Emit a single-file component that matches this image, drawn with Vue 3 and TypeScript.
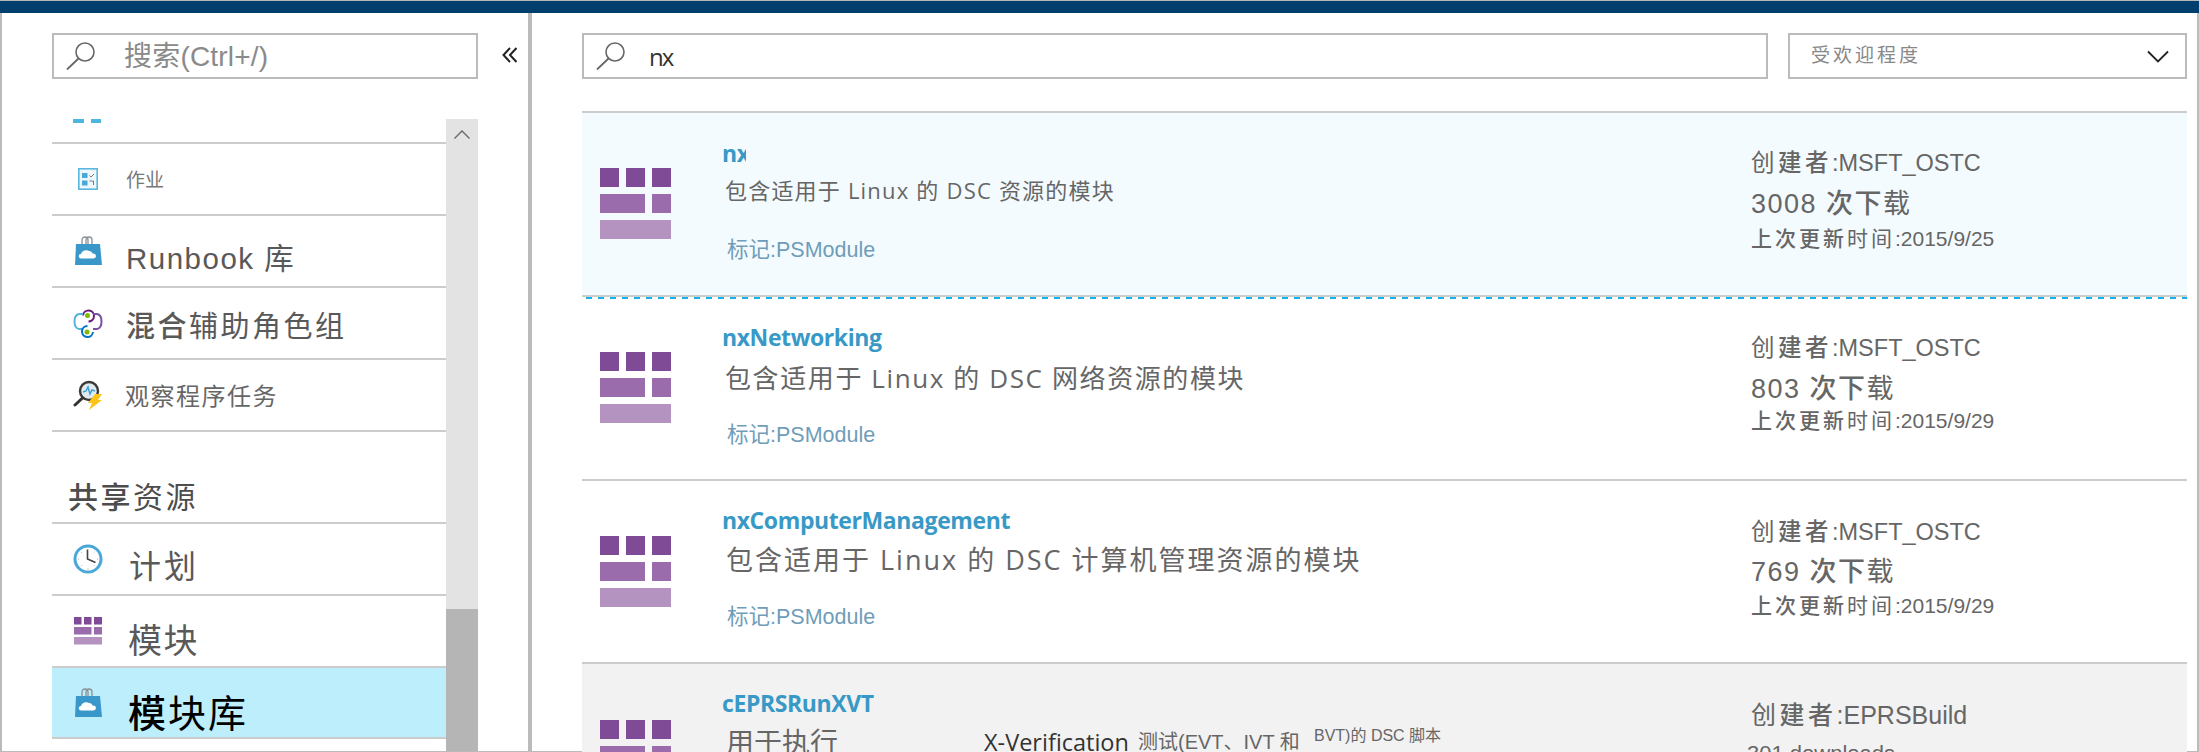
<script setup lang="ts">
interface SideItem {
  key: string;
  strong: string;
  rest: string;
  icon: string;
}

interface ModuleRow {
  key: string;
  name: string;
  desc: string;
  author: string;
  downloads: string;
  updated: string;
}

const opsItems: SideItem[] = [
  { key: 'job', strong: '', rest: '作业', icon: 'job' },
  { key: 'runbook', strong: '', rest: 'Runbook 库', icon: 'bag' },
  { key: 'hybrid', strong: '混合', rest: '辅助角色组', icon: 'hybrid' },
  { key: 'watcher', strong: '', rest: '观察程序任务', icon: 'watcher' },
];

const sharedItems: SideItem[] = [
  { key: 'schedule', strong: '', rest: '计划', icon: 'clock' },
  { key: 'modules', strong: '', rest: '模块', icon: 'bricks' },
  { key: 'gallery', strong: '模', rest: '块库', icon: 'bag' },
];

const rows: ModuleRow[] = [
  {
    key: 'nx',
    name: 'nx',
    desc: '包含适用于 Linux 的 DSC 资源的模块',
    author: 'MSFT_OSTC',
    downloads: '3008',
    updated: '2015/9/25',
  },
  {
    key: 'net',
    name: 'nxNetworking',
    desc: '包含适用于 Linux 的 DSC 网络资源的模块',
    author: 'MSFT_OSTC',
    downloads: '803',
    updated: '2015/9/29',
  },
  {
    key: 'comp',
    name: 'nxComputerManagement',
    desc: '包含适用于 Linux 的 DSC 计算机管理资源的模块',
    author: 'MSFT_OSTC',
    downloads: '769',
    updated: '2015/9/29',
  },
];
</script>

<template>
  <div class="frame">
    <div class="topbar"></div>
    <div class="body">
      <aside class="sidebar">
        <div class="side-head">
          <div class="searchbox side-search">
            <svg class="mag" viewBox="0 0 30 28" width="30" height="28">
              <circle cx="19" cy="10" r="9" fill="none" stroke="#666" stroke-width="1.6" />
              <path d="M12.5 16.5 1 27.5" fill="none" stroke="#666" stroke-width="1.8" />
            </svg>
            <span class="placeholder">搜索(Ctrl+/)</span>
          </div>
          <svg class="collapse" viewBox="0 0 16 16" width="16" height="16">
            <path d="M8 1 1.5 8 8 15M14.500 1 8 8l6.500 7" fill="none" stroke="#222" stroke-width="2" />
          </svg>
        </div>
        <div class="side-scroll">
          <div class="side-list">
            <div class="clipped-item"><i></i><i></i></div>
            <div v-for="item in opsItems" :key="item.key" class="side-item" :class="item.key">
              <span class="icon-box">
                <svg v-if="item.icon === 'job'" viewBox="0 0 20 22" width="20" height="22">
                  <rect x="0.800" y="0.800" width="18.400" height="20.400" fill="#eef8fc" stroke="#5bb6e0" stroke-width="1.600" />
                  <rect x="4" y="5" width="5.500" height="5" fill="#4aa8d8" />
                  <rect x="4" y="12.500" width="5.500" height="5" fill="#4aa8d8" />
                  <path d="m11.500 7.500 1.500 1.500 3-3M11.500 13h4v4" fill="none" stroke="#777" stroke-width="1" />
                </svg>
                <svg v-else-if="item.icon === 'bag'" viewBox="0 0 28 30" width="28" height="30">
                  <path d="M8 9V4c0-4 6-4 6 0v5M12 9V4c0-4 6-4 6 0v5" fill="none" stroke="#8a8f93" stroke-width="1.300" />
                  <path d="M2 8h24l2 21-27 0z" fill="#3a97c9" />
                  <path d="M7 22.500c-3 0-3-4.500 0-4.500 .5-3 5-5 8-3 2 0 3 1 3.500 2.500 4.500-.5 4.500 5 .5 5z" fill="#fff" />
                </svg>
                <svg v-else-if="item.icon === 'hybrid'" viewBox="0 0 30 30" width="30" height="30">
                  <path d="M10 7.500a5.500 5.500 0 1 1 5.500 6" fill="none" stroke="#68217a" stroke-width="2" />
                  <path d="M20 6h4c6 1 6 14 0 15h-4" fill="none" stroke="#7b4fa3" stroke-width="2" />
                  <path d="M10 6H6c-6 1-6 14 0 15h4" fill="none" stroke="#59b4d9" stroke-width="2" />
                  <path d="M20 24a5.500 5.500 0 1 1-5.500-6" fill="none" stroke="#0072c6" stroke-width="2" />
                  <circle cx="14.500" cy="7.500" r="2.500" fill="#7fba00" />
                  <circle cx="14" cy="24" r="2.500" fill="#7fba00" />
                </svg>
                <svg v-else-if="item.icon === 'watcher'" viewBox="0 0 30 30" width="30" height="30">
                  <circle cx="16" cy="11" r="9" fill="#dfeaf1" stroke="#3a3a3a" stroke-width="2.400" />
                  <path d="m10 12 3-1 2-4 2 7 2-4 3 1" fill="none" stroke="#3f9fd6" stroke-width="1.500" />
                  <path d="M9.500 18 2 25" fill="none" stroke="#333" stroke-width="3" stroke-linecap="round" />
                  <path d="M22 14h7l-4 6h4L16 30l3-7h-4z" fill="#fcc419" />
                </svg>
              </span>
              <span class="side-label"><b v-if="item.strong">{{ item.strong }}</b>{{ item.rest }}</span>
            </div>
            <div class="side-heading"><b>共享</b>资源</div>
            <div v-for="item in sharedItems" :key="item.key" class="side-item" :class="item.key">
              <span class="icon-box">
                <svg v-if="item.icon === 'clock'" viewBox="0 0 30 30" width="30" height="30">
                  <circle cx="15" cy="15" r="13" fill="#fff" stroke="#4aa8d8" stroke-width="3" />
                  <path d="M14.500 5.500V15l8 3.500" fill="none" stroke="#444" stroke-width="1.600" />
                  <path d="M15 24.500v1M5 15h1M24 15h1M8 8l.7 .7M21.500 8l-.7 .7M8 22l.7-.7M21.500 22l-.7-.7" stroke="#aaa" stroke-width="1" />
                </svg>
                <svg v-else-if="item.icon === 'bricks'" viewBox="0 0 28 28" width="28" height="28">
                  <rect x="0" y="0" width="7.500" height="7.500" fill="#7f4a96" />
                  <rect x="10" y="0" width="7.500" height="7.500" fill="#7f4a96" />
                  <rect x="20" y="0" width="8" height="7.500" fill="#7f4a96" />
                  <rect x="0" y="10" width="17.500" height="7.500" fill="#9a6cab" />
                  <rect x="20" y="10" width="8" height="7.500" fill="#9a6cab" />
                  <rect x="0" y="20" width="28" height="7.500" fill="#b493c1" />
                </svg>
                <svg v-else-if="item.icon === 'bag'" viewBox="0 0 28 30" width="28" height="30">
                  <path d="M8 9V4c0-4 6-4 6 0v5M12 9V4c0-4 6-4 6 0v5" fill="none" stroke="#8a8f93" stroke-width="1.300" />
                  <path d="M2 8h24l2 21-27 0z" fill="#3a97c9" />
                  <path d="M7 22.500c-3 0-3-4.500 0-4.500 .5-3 5-5 8-3 2 0 3 1 3.500 2.500 4.500-.5 4.500 5 .5 5z" fill="#fff" />
                </svg>
              </span>
              <span class="side-label"><b v-if="item.strong">{{ item.strong }}</b>{{ item.rest }}</span>
            </div>
          </div>
          <div class="scrollbar">
            <svg class="scroll-up" viewBox="0 0 16 9" width="16" height="9">
              <path d="M.5 8.500 8 1l7.500 7.500" fill="none" stroke="#666" stroke-width="1.300" />
            </svg>
            <div class="scroll-thumb"></div>
          </div>
        </div>
      </aside>

      <main class="main">
        <div class="toolbar">
          <div class="searchbox main-search">
            <svg class="mag" viewBox="0 0 30 28" width="30" height="28">
              <circle cx="19" cy="10" r="9" fill="none" stroke="#666" stroke-width="1.600" />
              <path d="M12.500 16.500 1 27.500" fill="none" stroke="#666" stroke-width="1.800" />
            </svg>
            <span class="query">nx</span>
          </div>
          <div class="searchbox sort">
            <span class="sort-label">受欢迎程度</span>
            <svg viewBox="0 0 22 13" width="22" height="13">
              <path d="M1 1.500 11 11.500 21 1.500" fill="none" stroke="#222" stroke-width="1.800" />
            </svg>
          </div>
        </div>

        <div class="results">
          <article v-for="row in rows" :key="row.key" class="row" :class="row.key">
            <svg class="row-icon" viewBox="0 0 71 71" width="71" height="71">
              <rect x="0" y="0" width="19" height="19" fill="#7f4a96" />
              <rect x="26" y="0" width="19" height="19" fill="#7f4a96" />
              <rect x="52" y="0" width="19" height="19" fill="#7f4a96" />
              <rect x="0" y="26" width="45" height="19" fill="#9a6cab" />
              <rect x="52" y="26" width="19" height="19" fill="#9a6cab" />
              <rect x="0" y="52" width="71" height="19" fill="#b493c1" />
            </svg>
            <div class="row-main">
              <div class="row-name">{{ row.name }}</div>
              <div class="row-desc">{{ row.desc }}</div>
              <div class="row-tags">标记:PSModule</div>
            </div>
            <div class="row-meta">
              <div class="meta-author"><span class="cjk">创<b>建者</b></span>:{{ row.author }}</div>
              <div class="meta-count">{{ row.downloads }} <b>次下</b>载</div>
              <div class="meta-date"><span class="cjk"><b>上次更新</b>时间</span>:{{ row.updated }}</div>
            </div>
          </article>
          <article class="row eprs">
            <svg class="row-icon" viewBox="0 0 71 71" width="71" height="71">
              <rect x="0" y="0" width="19" height="19" fill="#7f4a96" />
              <rect x="26" y="0" width="19" height="19" fill="#7f4a96" />
              <rect x="52" y="0" width="19" height="19" fill="#7f4a96" />
              <rect x="0" y="26" width="45" height="19" fill="#9a6cab" />
              <rect x="52" y="26" width="19" height="19" fill="#9a6cab" />
            </svg>
            <div class="row-main">
              <div class="row-name">cEPRSRunXVT</div>
              <div class="row-desc eprs-desc">
                <span class="d1">用于执行</span>
                <span class="d2">X-Verification</span>
                <span class="d3">测试(EVT、IVT 和</span>
                <span class="d4">BVT)的 DSC 脚本</span>
              </div>
            </div>
            <div class="row-meta">
              <div class="meta-author"><span class="cjk">创<b>建者</b></span>:EPRSBuild</div>
              <div class="meta-count plain">301 downloads</div>
            </div>
          </article>
        </div>
      </main>
    </div>
    <div class="bottom-edge"></div>
  </div>
</template>

<style scoped>
.frame {
  width: 2199px;
  height: 752px;
  box-sizing: border-box;
  display: flex;
  flex-direction: column;
  overflow: hidden;
  border-top: 1px solid #b5b9bc;
  background: #fff;
  font-family: "Liberation Sans", "Noto Sans CJK SC", sans-serif;
  color: #666;
}

b {
  font-weight: 500;
}

.topbar {
  height: 12px;
  flex: none;
  background: #003e6d;
}

.body {
  flex: 1;
  min-height: 0;
  display: flex;
  border-left: 2px solid #bbb;
  border-right: 2px solid #bbb;
}

.bottom-edge {
  height: 1px;
  flex: none;
  background: linear-gradient(90deg, #bbb 0 714px, #f2f2f2 714px 976px, #bbb 976px 1126px, #f2f2f2 1126px 1361px, #bbb 1361px);
}

.sidebar {
  width: 530px;
  flex: none;
  box-sizing: border-box;
  border-right: 4px solid #bbb;
  padding: 20px 0 0 50px;
  display: flex;
  flex-direction: column;
}

.side-head {
  display: flex;
  align-items: center;
  flex: none;
}

.searchbox {
  height: 46px;
  box-sizing: border-box;
  border: 2px solid #bbb;
  background: #fff;
  display: flex;
  align-items: center;
}

.side-search {
  width: 426px;
  padding-left: 12px;
}

.mag {
  flex: none;
}

.placeholder {
  margin-left: 28px;
  margin-top: -5px;
  font-size: 28px;
  color: #8a8a8a;
  letter-spacing: 0.2px;
}

.collapse {
  margin-left: 24px;
  margin-top: -2px;
}

.side-scroll {
  flex: 1;
  min-height: 0;
  margin-top: 40px;
  display: flex;
  width: 426px;
  overflow: hidden;
}

.side-list {
  width: 394px;
  flex: none;
}

.clipped-item {
  height: 23px;
  border-bottom: 2px solid #ccc;
  padding-left: 21px;
  display: flex;
  gap: 7px;
}

.clipped-item i {
  width: 10.500px;
  height: 4px;
  background: #4db5e0;
}

.side-item {
  height: 70px;
  border-bottom: 2px solid #ccc;
  display: flex;
  align-items: center;
}

.icon-box {
  width: 30px;
  margin-left: 21px;
  flex: none;
  display: flex;
  justify-content: center;
}

.side-label {
  white-space: nowrap;
  color: #595959;
}

.job .side-label {
  margin-left: 23px;
  margin-top: -2px;
  font-size: 19px;
  color: #777;
}

.runbook .side-label {
  margin-left: 23px;
  padding-top: 10px;
  font-size: 29.500px;
  letter-spacing: 1.500px;
}

.hybrid .side-label {
  margin-left: 23px;
  padding-top: 2px;
  font-size: 29px;
  letter-spacing: 2.500px;
}

.watcher .side-label {
  margin-left: 22px;
  margin-top: -2px;
  font-size: 24px;
  letter-spacing: 1.500px;
  color: #666;
}

.side-heading {
  height: 92px;
  box-sizing: border-box;
  border-bottom: 2px solid #ccc;
  padding: 46px 0 0 16px;
  font-size: 30px;
  line-height: 40px;
  letter-spacing: 2.500px;
  color: #4d4d4d;
}

.schedule .side-label {
  margin-left: 26px;
  padding-top: 10px;
  font-size: 32px;
  letter-spacing: 3px;
}

.modules .side-label {
  margin-left: 25px;
  padding-top: 14px;
  font-size: 34px;
  letter-spacing: 1.500px;
}

.gallery {
  height: 69px;
  background: #bdeefb;
}

.gallery .side-label {
  margin-left: 25px;
  padding-top: 16px;
  font-size: 38px;
  letter-spacing: 2px;
  color: #000;
}

.scrollbar {
  width: 32px;
  flex: none;
  background: #e3e3e3;
  display: flex;
  flex-direction: column;
  align-items: center;
}

.scroll-up {
  margin-top: 11px;
}

.scroll-thumb {
  width: 100%;
  margin-top: 470px;
  flex: 1;
  background: #b5b5b5;
}

.main {
  flex: 1;
  min-width: 0;
  padding: 20px 10px 0 50px;
  display: flex;
  flex-direction: column;
}

.toolbar {
  display: flex;
  gap: 20px;
  flex: none;
}

.main-search {
  width: 1186px;
  padding-left: 12px;
}

.query {
  margin-left: 23px;
  font-family: "Open Sans", sans-serif;
  font-size: 24px;
  letter-spacing: -2px;
  color: #333;
}

.sort {
  flex: 1;
  justify-content: space-between;
  padding: 0 16px 0 21px;
}

.sort-label {
  font-size: 19px;
  letter-spacing: 3px;
  color: #888;
  margin-top: -6px;
}

.results {
  margin-top: 32px;
  flex: 1;
  min-height: 0;
  border-top: 2px solid #ccc;
}

.row {
  height: 181px;
  border-bottom: 2px solid #ccc;
  display: flex;
  position: relative;
  overflow: hidden;
}

.row-icon {
  flex: none;
  margin: 55px 0 0 18px;
}

.row-main {
  width: 1080px;
  flex: none;
  padding-left: 52px;
  box-sizing: border-box;
}

.row-name {
  margin-left: -1px;
  font-family: "Open Sans", sans-serif;
  font-weight: 700;
  font-size: 23px;
  line-height: 28px;
  color: #3999c6;
  white-space: nowrap;
  letter-spacing: -0.400px;
}

.row-desc {
  white-space: nowrap;
  font-family: "Open Sans", "Noto Sans CJK SC", sans-serif;
  color: #666;
}

.row-tags {
  white-space: nowrap;
  color: #6f9db9;
  font-size: 21.500px;
  line-height: 26px;
  padding-left: 4px;
}

.row-meta {
  flex: 1;
  min-width: 0;
  white-space: nowrap;
  color: #666;
}

.cjk {
  letter-spacing: 3.500px;
}

.meta-author {
  font-size: 23.500px;
  line-height: 30px;
}

.meta-count {
  font-size: 27px;
  line-height: 30px;
  letter-spacing: 1.500px;
}

.meta-date {
  font-size: 21px;
  line-height: 26px;
}

.meta-date .cjk {
  letter-spacing: 3px;
}

.nx {
  height: 182px;
  background: #f4fbfe;
}

.nx .row-main {
  padding-top: 26px;
}

.nx .row-name {
  width: 24px;
  overflow: hidden;
}

.nx .row-desc {
  margin-top: 7px;
  padding-left: 2px;
  font-size: 22px;
  line-height: 32px;
  letter-spacing: 1.200px;
}

.nx .row-tags {
  margin-top: 31px;
}

.nx .row-meta {
  padding-top: 35px;
}

.nx .meta-count {
  margin-top: 11px;
}

.nx .meta-date {
  margin-top: 7px;
}

.net {
  height: 180px;
  padding-top: 2px;
  background:
    linear-gradient(#fff, #fff) 0 2px no-repeat,
    repeating-linear-gradient(90deg, #0fb4ee 0 6px, transparent 6px 12px) 4px 0 / 100% 2px no-repeat;
}

.net .row-icon {
  margin-top: 53px;
}

.net .row-main {
  padding-top: 24px;
}

.net .row-desc {
  margin-top: 8px;
  padding-left: 2px;
  font-size: 26px;
  line-height: 38px;
  letter-spacing: 1.600px;
}

.net .row-tags {
  margin-top: 25px;
}

.net .row-meta {
  padding-top: 34px;
}

.net .meta-count {
  margin-top: 11px;
}

.net .meta-date {
  margin-top: 4px;
}

.comp .row-main {
  padding-top: 25px;
}

.comp .row-desc {
  margin-top: 6px;
  padding-left: 3px;
  font-size: 27px;
  line-height: 40px;
  letter-spacing: 2px;
}

.comp .row-tags {
  margin-top: 24px;
}

.comp .row-meta {
  padding-top: 36px;
}

.comp .meta-count {
  margin-top: 10px;
}

.comp .meta-date {
  margin-top: 6px;
}

.eprs {
  height: 90px;
  border-bottom: none;
  background: #f2f2f2;
}

.eprs .row-icon {
  margin-top: 56px;
}

.eprs .row-main {
  padding-top: 25px;
}

.eprs-desc {
  margin-top: 7px;
  display: flex;
  align-items: flex-start;
  line-height: 36px;
}

.d1 {
  width: 261px;
  flex: none;
  padding-left: 3px;
  box-sizing: border-box;
  font-size: 28px;
}

.d2 {
  width: 154px;
  flex: none;
  font-size: 23.500px;
  color: #333;
}

.d3 {
  width: 176px;
  flex: none;
  font-family: "Liberation Sans", "Noto Sans CJK SC", sans-serif;
  font-size: 20px;
}

.d4 {
  font-family: "Liberation Sans", "Noto Sans CJK SC", sans-serif;
  font-size: 16px;
  line-height: 22px;
  margin-top: 1px;
}

.eprs .row-meta {
  padding-top: 36px;
}

.eprs .meta-author {
  font-size: 25px;
}

.eprs .plain {
  margin-top: 9px;
  margin-left: -4px;
  font-size: 22px;
  letter-spacing: 0;
}
</style>

<style>
html,
body {
  margin: 0;
  background: #fff;
}
</style>
